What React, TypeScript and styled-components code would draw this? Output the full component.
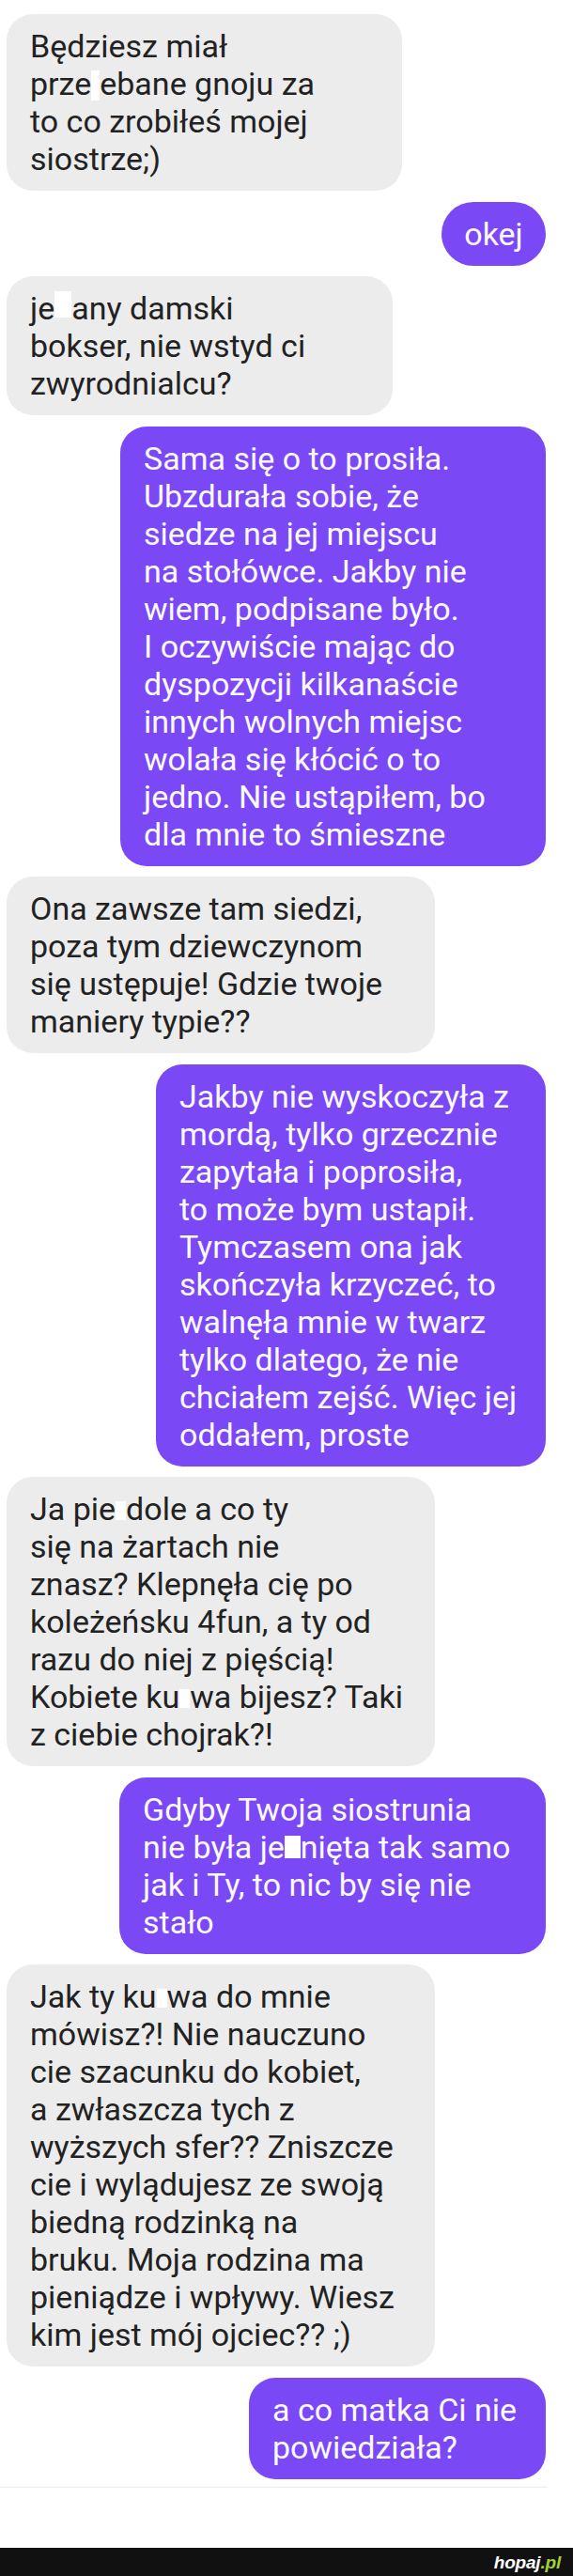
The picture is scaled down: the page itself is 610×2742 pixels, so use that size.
import React from "react";
import styled, { createGlobalStyle } from "styled-components";

const GlobalStyle = createGlobalStyle`
  html, body {
    margin: 0;
    padding: 0;
    background: #ffffff;
  }
  #root {
    width: 610px;
  }
`;

const Page = styled.div`
  width: 610px;
  min-height: 2742px;
  display: flex;
  flex-direction: column;
  background: #ffffff;
`;

const Thread = styled.div`
  display: flex;
  flex-direction: column;
  gap: 11.5px;
  padding: 15px 29px 0 7px;
`;

const Bubble = styled.div<{ $out?: boolean; $width: number; $pill?: boolean }>`
  align-self: ${(p) => (p.$out ? "flex-end" : "flex-start")};
  width: ${(p) => p.$width}px;
  box-sizing: border-box;
  padding: 14px ${(p) => (p.$pill ? 24 : 25)}px;
  border-radius: ${(p) => (p.$pill ? 34 : 28)}px;
  background: ${(p) => (p.$out ? "#7a49f5" : "#ececec")};
  color: ${(p) => (p.$out ? "#fbf9ff" : "#222222")};
  font-family: Roboto, "Noto Sans", sans-serif;
  font-size: 34px;
  line-height: 40px;
  text-align: ${(p) => (p.$pill ? "center" : "left")};
`;

const Line = styled.div`
  white-space: pre;
`;

const Censor = styled.span<{ $w: number; $h: number; $drop?: number }>`
  display: inline-block;
  width: ${(p) => p.$w}px;
  height: ${(p) => p.$h}px;
  background: #ffffff;
  vertical-align: ${(p) => -(p.$drop ?? 0)}px;
`;

const Divider = styled.div`
  margin-top: 8px;
  width: 583px;
  height: 1px;
  background: #ebebeb;
`;

const Footer = styled.div`
  margin-top: auto;
  height: 30px;
  background: #111111;
  display: flex;
  justify-content: flex-end;
  align-items: center;
  padding-right: 13px;
`;

const Logo = styled.span`
  font-family: "Liberation Sans", Arial, sans-serif;
  font-style: italic;
  font-weight: 700;
  font-size: 19px;
  line-height: 1;
  color: #ffffff;
  letter-spacing: -0.2px;
`;

const LogoTld = styled.span`
  color: #a3d13b;
`;

type Msg = {
  out?: boolean;
  pill?: boolean;
  width: number;
  lines: React.ReactNode[];
};

const messages: Msg[] = [
  {
    width: 421,
    lines: [
      "Będziesz miał",
      <>prze<Censor $w={9} $h={32} $drop={6} />ebane gnoju za</>,
      "to co zrobiłeś mojej",
      "siostrze;)",
    ],
  },
  { out: true, pill: true, width: 111, lines: ["okej"] },
  {
    width: 411,
    lines: [
      <>je<Censor $w={18} $h={28} $drop={-2} />any damski</>,
      "bokser, nie wstyd ci",
      "zwyrodnialcu?",
    ],
  },
  {
    out: true,
    width: 453,
    lines: [
      "Sama się o to prosiła.",
      "Ubzdurała sobie, że",
      "siedze na jej miejscu",
      "na stołówce. Jakby nie",
      "wiem, podpisane było.",
      "I oczywiście mając do",
      "dyspozycji kilkanaście",
      "innych wolnych miejsc",
      "wolała się kłócić o to",
      "jedno. Nie ustąpiłem, bo",
      "dla mnie to śmieszne",
    ],
  },
  {
    width: 456,
    lines: [
      "Ona zawsze tam siedzi,",
      "poza tym dziewczynom",
      "się ustępuje! Gdzie twoje",
      "maniery typie??",
    ],
  },
  {
    out: true,
    width: 415,
    lines: [
      "Jakby nie wyskoczyła z",
      "mordą, tylko grzecznie",
      "zapytała i poprosiła,",
      "to może bym ustapił.",
      "Tymczasem ona jak",
      "skończyła krzyczeć, to",
      "walnęła mnie w twarz",
      "tylko dlatego, że nie",
      "chciałem zejść. Więc jej",
      "oddałem, proste",
    ],
  },
  {
    width: 456,
    lines: [
      <>Ja pie<Censor $w={11} $h={20} />dole a co ty</>,
      "się na żartach nie",
      "znasz? Klepnęła cię po",
      "koleżeńsku 4fun, a ty od",
      "razu do niej z pięścią!",
      <>Kobiete ku<Censor $w={11} $h={20} />wa bijesz? Taki</>,
      "z ciebie chojrak?!",
    ],
  },
  {
    out: true,
    width: 454,
    lines: [
      "Gdyby Twoja siostrunia",
      <>nie była je<Censor $w={17} $h={24} />nięta tak samo</>,
      "jak i Ty, to nic by się nie",
      "stało",
    ],
  },
  {
    width: 456,
    lines: [
      <>Jak ty ku<Censor $w={11} $h={20} />wa do mnie</>,
      "mówisz?! Nie nauczuno",
      "cie szacunku do kobiet,",
      "a zwłaszcza tych z",
      "wyższych sfer?? Zniszcze",
      "cie i wylądujesz ze swoją",
      "biedną rodzinką na",
      "bruku. Moja rodzina ma",
      "pieniądze i wpływy. Wiesz",
      "kim jest mój ojciec?? ;)",
    ],
  },
  {
    out: true,
    width: 316,
    lines: ["a co matka Ci nie", "powiedziała?"],
  },
];

export default function App() {
  return (
    <>
      <GlobalStyle />
      <Page>
        <Thread>
          {messages.map((m, i) => (
            <Bubble key={i} $out={m.out} $pill={m.pill} $width={m.width}>
              {m.lines.map((l, j) => (
                <Line key={j}>{l}</Line>
              ))}
            </Bubble>
          ))}
        </Thread>
        <Divider />
        <Footer>
          <Logo>
            hopaj<LogoTld>.pl</LogoTld>
          </Logo>
        </Footer>
      </Page>
    </>
  );
}
